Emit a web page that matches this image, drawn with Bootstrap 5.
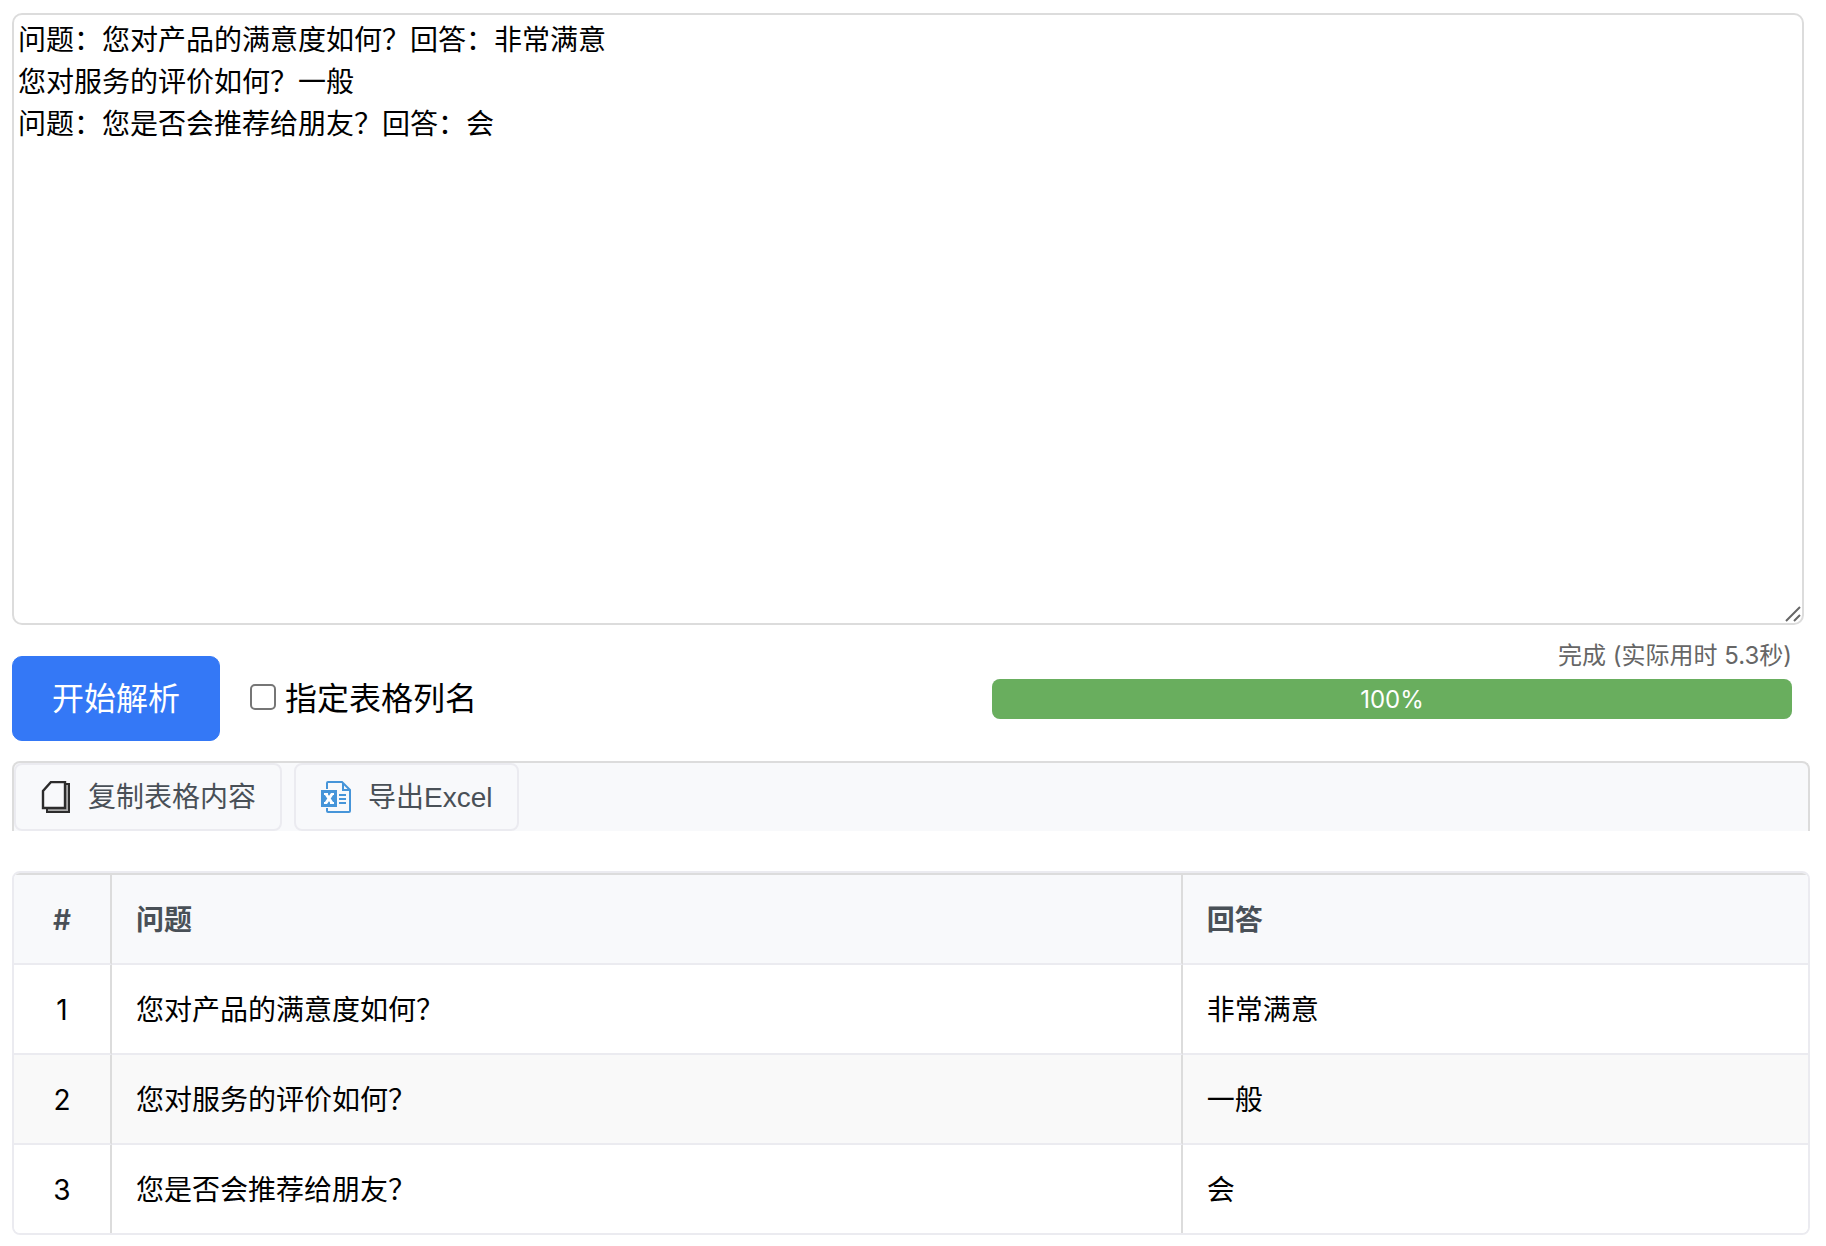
<!DOCTYPE html>
<html lang="zh-CN">
<head>
<meta charset="utf-8">
<meta name="viewport" content="width=device-width, initial-scale=1">
<title>问答解析</title>
<link rel="stylesheet" href="https://cdn.jsdelivr.net/npm/bootstrap@5.3.0/dist/css/bootstrap.min.css">
<style>
  body { font-family: Inter, "Noto Sans CJK SC", sans-serif; color: #000; background: #fff; }
  .page-wrap { padding: 13px 16px 11px 12px; }
  .source-box { margin-right: 6px; }
  .source-text {
    height: 612px; padding: 2px 4px; border: 2px solid #dcdcdc; border-radius: 10px;
    font-size: 28px; line-height: 42px; color: #000; resize: none;
    font-family: "Noto Sans CJK SC", sans-serif;
  }
  .resize-grip { right: 3px; bottom: 3px; }
  .action-row { margin: 16px 0 20px; }
  .btn-parse {
    --bs-btn-bg: #3478f6; --bs-btn-border-color: #3478f6; --bs-btn-color: #fff;
    --bs-btn-hover-bg: #2467e0; --bs-btn-hover-color: #fff;
    width: 208px; height: 85px; padding: 0; border-radius: 10px; font-size: 32px;
  }
  .option-group { height: 85px; margin-left: 30px; gap: 9px; font-size: 32px; }
  .option-group .form-check-input { width: 26px; height: 26px; margin: 0 0 4px; border: 2px solid #767676; border-radius: 5px; }
  .status-col { flex: 0 0 44.5%; margin: 0 18px 22px auto; }
  .status-label { margin-bottom: 8px; font-size: 24px; line-height: 30px; color: #666; }
  .status-col .progress { height: 40px; border-radius: 8px; font-size: 24px; --bs-progress-bar-bg: #69ae5e; }
  .status-col .progress-bar { padding-top: 2px; }
  .tool-strip { gap: 12px; background: #f8f9fb; border: 2px solid #dcdcdc; border-bottom: 0; border-radius: 8px 8px 0 0; }
  .btn-tool {
    --bs-btn-bg: #f8f9fb; --bs-btn-border-color: #ebebf0; --bs-btn-color: #495057;
    --bs-btn-hover-bg: #eceef1; --bs-btn-hover-color: #495057;
    height: 68px; padding: 0 24px; gap: 16px; border-width: 2px; border-radius: 8px; font-size: 28px;
    font-family: "Liberation Sans", "Noto Sans CJK SC", sans-serif;
  }
  .btn-tool span { padding-top: 2px; }
  .result-box { margin-top: 40px; border: 2px solid #ebebf0; border-radius: 8px; }
  .result-table { table-layout: fixed; border-collapse: separate; border-spacing: 0; font-size: 28px; line-height: 42px; }
  .result-table > :not(caption) > * > * { padding: 24px 24px 22px; border-bottom: 2px solid #ebebf0; color: #000; background: #fff; }
  .result-table > thead > tr > th { border-top: 2px solid #dcdcdc; background: #f8f9fb; color: #495057; font-weight: 600; }
  .result-table tr > :not(:last-child) { border-right: 2px solid #dcdcdc; }
  .result-table > tbody > tr:nth-child(even) > td { background: #f9f9f9; }
  .result-table > tbody > tr:last-child > td { border-bottom: 0; }
  .result-table tr > :first-child { padding-left: 0; padding-right: 0; text-align: center; }
  .col-index { width: 98px; }
  .col-answer { width: 34.85%; }
</style>
</head>
<body>
<main class="page-wrap">
  <div class="source-box position-relative">
    <textarea class="source-text form-control" aria-label="待解析文本" spellcheck="false">问题：您对产品的满意度如何？回答：非常满意
您对服务的评价如何？一般
问题：您是否会推荐给朋友？回答：会</textarea>
    <svg class="resize-grip position-absolute" width="16" height="16" viewBox="0 0 16 16" fill="none" stroke="#666" stroke-width="2" aria-hidden="true"><path d="M1 15 15 1M9 15l6-6"/></svg>
  </div>

  <div class="action-row d-flex align-items-end">
    <button type="button" class="btn btn-parse">开始解析</button>
    <div class="option-group d-flex align-items-center">
      <input class="form-check-input" type="checkbox" id="customColumns">
      <label for="customColumns">指定表格列名</label>
    </div>
    <div class="status-col">
      <div class="status-label text-end">完成 (实际用时 5.3秒)</div>
      <div class="progress" role="progressbar" aria-label="解析进度" aria-valuenow="100" aria-valuemin="0" aria-valuemax="100">
        <div class="progress-bar" style="width: 100%">100%</div>
      </div>
    </div>
  </div>

  <div class="tool-strip d-flex">
    <button type="button" class="btn btn-tool d-flex align-items-center">
      <svg width="32" height="32" viewBox="0 0 32 32" fill="none" stroke="#2c2c2c" stroke-width="2" aria-hidden="true">
        <path fill="#aaa" d="M7 26v5h22V3h-4v23z"/>
        <path fill="#f8f9fb" stroke-width="2.4" d="M3 27V10l8-9h14v26z"/>
      </svg>
      <span>复制表格内容</span>
    </button>
    <button type="button" class="btn btn-tool d-flex align-items-center">
      <svg width="32" height="32" viewBox="0 0 32 32" fill="none" stroke="#4695d9" stroke-width="2" aria-hidden="true">
        <path d="M7 8V2q0-1 1-1h14l8 8v21q0 1-1 1H8q-1 0-1-1v-3M23 2v7h7"/>
        <path d="M19 14h7M19 18h7M19 22h7"/>
        <path fill="#4695d9" stroke="none" d="M1 9h16v17H1z"/>
        <path stroke="#fff" stroke-width="3" d="m6 13 6 9M12 13l-6 9"/>
        <path stroke="#fff" d="M4 13h4M11 13h3M4 22h3M10 22h4"/>
      </svg>
      <span>导出Excel</span>
    </button>
  </div>

  <div class="result-box overflow-hidden">
    <table class="result-table table mb-0">
      <colgroup><col class="col-index"><col><col class="col-answer"></colgroup>
      <thead><tr><th scope="col">#</th><th scope="col">问题</th><th scope="col">回答</th></tr></thead>
      <tbody>
        <tr><td>1</td><td>您对产品的满意度如何？</td><td>非常满意</td></tr>
        <tr><td>2</td><td>您对服务的评价如何？</td><td>一般</td></tr>
        <tr><td>3</td><td>您是否会推荐给朋友？</td><td>会</td></tr>
      </tbody>
    </table>
  </div>
</main>
<script src="https://cdn.jsdelivr.net/npm/bootstrap@5.3.0/dist/js/bootstrap.bundle.min.js"></script>
</body>
</html>
